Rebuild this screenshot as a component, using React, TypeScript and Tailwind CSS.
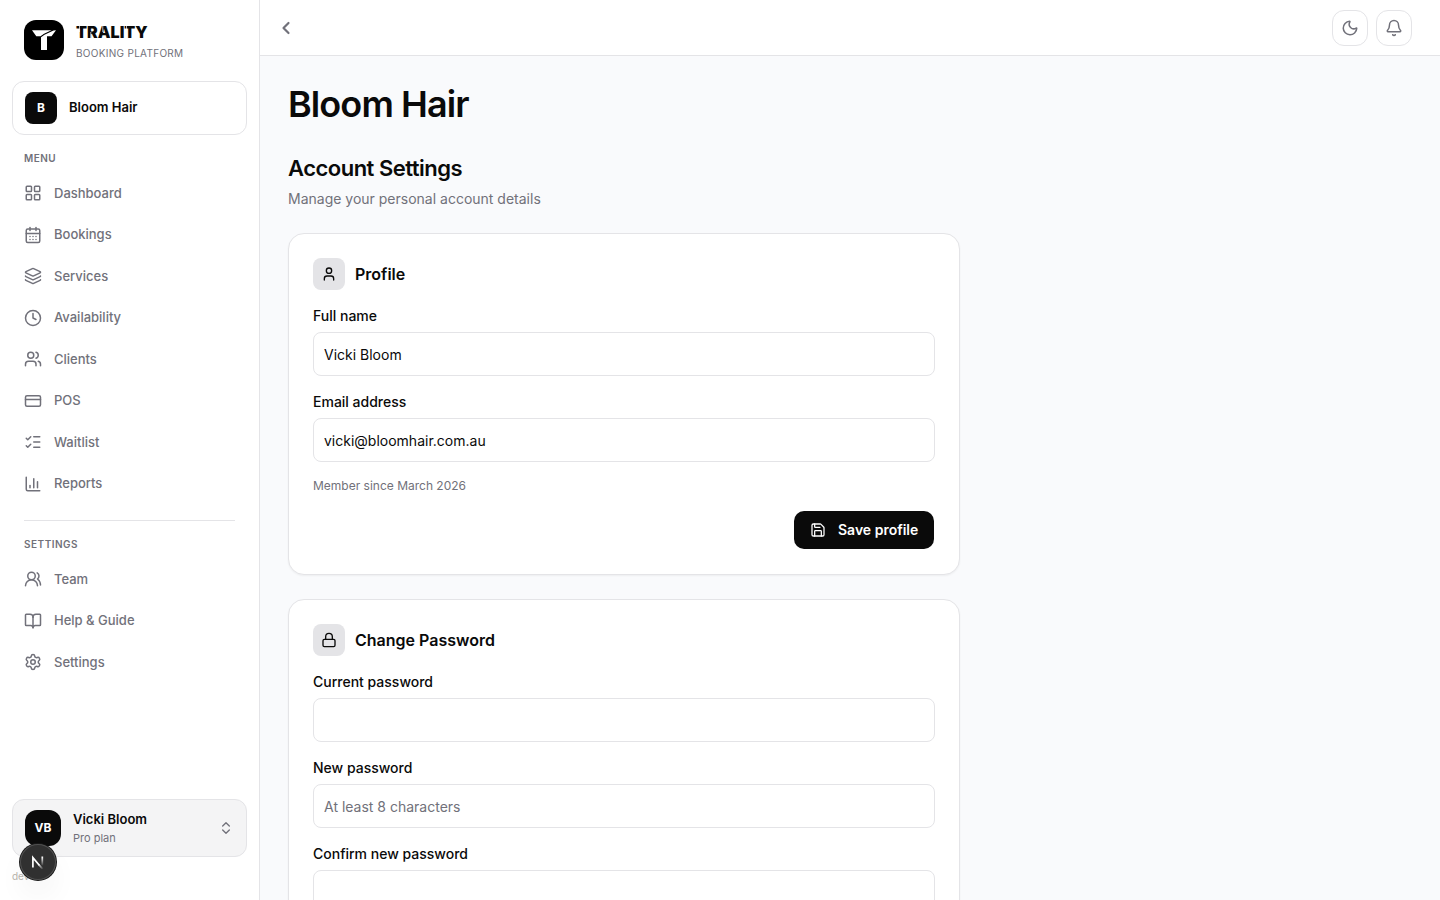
import React from "react";
import {
  LayoutGrid, CalendarDays, Layers, Clock, Users, CreditCard, ListChecks, ChartColumn,
  UsersRound, BookOpen, Settings, ChevronsUpDown, ChevronLeft, Moon, Bell, User, Lock, Save,
} from "lucide-react";
import type { LucideIcon } from "lucide-react";

const menu: [string, LucideIcon][] = [
  ["Dashboard", LayoutGrid],
  ["Bookings", CalendarDays],
  ["Services", Layers],
  ["Availability", Clock],
  ["Clients", Users],
  ["POS", CreditCard],
  ["Waitlist", ListChecks],
  ["Reports", ChartColumn],
];

const settings: [string, LucideIcon][] = [
  ["Team", UsersRound],
  ["Help & Guide", BookOpen],
  ["Settings", Settings],
];

function NavList({ items }: { items: [string, LucideIcon][] }) {
  return (
    <nav className="flex flex-col gap-0.5">
      {items.map(([label, Icon]) => (
        <a key={label} className="flex items-center gap-3 px-3 py-2.5 text-[13px] leading-[19.5px] font-medium text-[#71717a]">
          <Icon size={18} strokeWidth={2} className="mb-[0.6px]" />
          <span>{label}</span>
        </a>
      ))}
    </nav>
  );
}

function Sidebar() {
  return (
    <aside className="relative flex w-[260px] shrink-0 flex-col border-r border-[#e4e4e7] bg-white px-3">
      <div className="flex h-[60px] items-start gap-3 px-3 pt-5">
        <div className="flex size-10 items-center justify-center rounded-xl bg-black">
          <svg width="40" height="40" viewBox="0 0 40 40" fill="#fff">
            <path d="M8 10.200H27.500L20 13.700L16.500 16.300H12.300Z" />
            <path d="M32 10.200L27.500 16.300H23V30H17V17.300L20.500 14.700L29.500 10.600Z" />
          </svg>
        </div>
        <div className="flex flex-col pt-1">
          <span className="relative text-base leading-4 font-black tracking-[0.003em] text-[#0a0a0a]">
            TRALITY
            <svg className="absolute top-0 left-0" width="72" height="16" viewBox="0 0 72 16" fill="#fff">
              <rect x="3.100" y="2" width="0.700" height="6" />
              <rect x="14.500" y="8" width="0.700" height="7" />
              <rect x="26.500" y="2" width="0.700" height="6" />
              <rect x="50" y="2" width="0.700" height="6" />
            </svg>
          </span>
          <span className="mt-1.5 text-[10px] leading-[15px] tracking-[0.03em] text-[#71717a]">BOOKING PLATFORM</span>
        </div>
      </div>
      <div className="mt-[21px] flex h-[54px] w-[235px] items-center gap-3 rounded-xl border border-[#e4e4e7] bg-white px-3">
        <div className="flex size-8 items-center justify-center rounded-lg bg-[#0a0a0a] text-xs font-bold text-white">B</div>
        <span className="text-[13px] font-semibold text-[#0a0a0a]">Bloom Hair</span>
      </div>
      <p className="mt-4 mb-[7.75px] px-3 text-[10px] leading-[15px] font-semibold tracking-[0.05em] text-[#71717a]">MENU</p>
      <NavList items={menu} />
      <div className="mx-3 mt-4 h-px bg-[#e4e4e7]" />
      <p className="mt-4 mb-2 px-3 text-[10px] leading-[15px] font-semibold tracking-[0.05em] text-[#71717a]">SETTINGS</p>
      <NavList items={settings} />
      <div className="mt-auto mb-3 flex h-[58px] w-[235px] shrink-0 items-center gap-3 rounded-xl border border-[#e4e4e7] bg-[#f4f4f5] px-3">
        <div className="flex size-9 items-center justify-center rounded-xl bg-[#0a0a0a] text-xs font-bold text-white">VB</div>
        <div className="flex flex-1 flex-col">
          <span className="text-[13px] leading-[19.5px] font-semibold text-[#0a0a0a]">Vicki Bloom</span>
          <span className="text-[11px] leading-[16.500px] text-[#71717a]">Pro plan</span>
        </div>
        <ChevronsUpDown size={16} strokeWidth={2} className="text-[#71717a]" />
      </div>
      <p className="mb-4 text-[10px] leading-[15px] text-[#b8b5ad]">dev</p>
      <div className="absolute top-[844px] left-5 flex size-9 items-center justify-center rounded-full bg-[#303030] shadow-[0_0_0_1px_#171717,inset_0_0_0_1px_#505050,0_16px_32px_-8px_rgba(0,0,0,0.14)]">
        <svg width="14" height="14" viewBox="0 0 14 14" fill="none" strokeWidth="1.700">
          <defs>
            <linearGradient id="d" x1="8" y1="8.500" x2="12.500" y2="14" gradientUnits="userSpaceOnUse"><stop stopColor="#fff" /><stop offset="1" stopColor="#fff" stopOpacity="0" /></linearGradient>
            <linearGradient id="v" x1="11" y1="2" x2="11" y2="11" gradientUnits="userSpaceOnUse"><stop stopColor="#fff" /><stop offset="1" stopColor="#fff" stopOpacity="0" /></linearGradient>
          </defs>
          <path d="M1.900 12.500V2.600L8.300 10.300" stroke="#fff" />
          <path d="M8 9.900L11.700 14" stroke="url(#d)" />
          <path d="M11.300 1.500V10.500" stroke="url(#v)" />
        </svg>
      </div>
    </aside>
  );
}

function Card({ icon: Icon, title, children }: { icon: LucideIcon; title: string; children: React.ReactNode }) {
  return (
    <section className="w-[672px] shrink-0 rounded-2xl border border-[#e4e4e7] bg-white p-6 shadow-[0_1px_2px_rgba(0,0,0,0.05)]">
      <div className="mb-4 flex items-center gap-2.5">
        <div className="flex size-8 items-center justify-center rounded-lg bg-[#e4e4e7] text-[#0a0a0a]">
          <Icon size={16} strokeWidth={2} />
        </div>
        <h3 className="text-base leading-6 font-semibold text-[#0a0a0a]">{title}</h3>
      </div>
      {children}
    </section>
  );
}

function Field({ label, value, placeholder }: { label: string; value?: string; placeholder?: string }) {
  return (
    <label className="mb-4 block">
      <span className="mb-1.5 block text-sm leading-5 font-medium text-[#0a0a0a]">{label}</span>
      <input
        className="block h-11 w-full rounded-lg border border-[#e4e4e7] bg-white px-2.5 pt-px text-sm text-[#0a0a0a] outline-none placeholder:text-[#71717a]"
        defaultValue={value}
        placeholder={placeholder}
      />
    </label>
  );
}

export default function App() {
  return (
    <div className="flex h-[900px] w-[1440px] overflow-hidden bg-[#f9fafc] font-[Inter,sans-serif] text-[#0a0a0a]">
      <Sidebar />
      <div className="flex min-w-0 flex-1 flex-col">
        <header className="flex h-14 shrink-0 items-center justify-between border-b border-[#e4e4e7] bg-white pr-7 pl-4 text-[#71717a]">
          <ChevronLeft size={20} strokeWidth={2.6} />
          <div className="flex gap-2">
            {[Moon, Bell].map((Icon, i) => (
              <button key={i} className="flex size-9 items-center justify-center rounded-xl border border-[#e4e4e7] bg-white">
                <Icon size={18} strokeWidth={2} />
              </button>
            ))}
          </div>
        </header>
        <main className="flex min-h-0 flex-1 flex-col overflow-hidden px-7 pt-7">
          <h1 className="text-4xl leading-10 font-semibold tracking-[-0.025em]">Bloom Hair</h1>
          <h2 className="mt-7 text-[22px] leading-8 font-semibold tracking-[-0.023em]">Account Settings</h2>
          <p className="mt-[5px] mb-6 text-sm leading-5 text-[#71717a]">Manage your personal account details</p>
          <div className="flex flex-col gap-6">
            <Card icon={User} title="Profile">
              <Field label="Full name" value="Vicki Bloom" />
              <Field label="Email address" value="vicki@bloomhair.com.au" />
              <p className="text-xs leading-4 text-[#71717a]">Member since March 2026</p>
              <div className="mt-4 flex justify-end p-px">
                <button className="flex h-[38px] w-[140px] items-center gap-3 rounded-[10px] bg-[#0a0a0a] px-4 text-sm font-semibold whitespace-nowrap text-white">
                  <Save size={16} strokeWidth={1.9} className="shrink-0" />
                  Save profile
                </button>
              </div>
            </Card>
            <Card icon={Lock} title="Change Password">
              <Field label="Current password" />
              <Field label="New password" placeholder="At least 8 characters" />
              <Field label="Confirm new password" />
            </Card>
          </div>
        </main>
      </div>
    </div>
  );
}
